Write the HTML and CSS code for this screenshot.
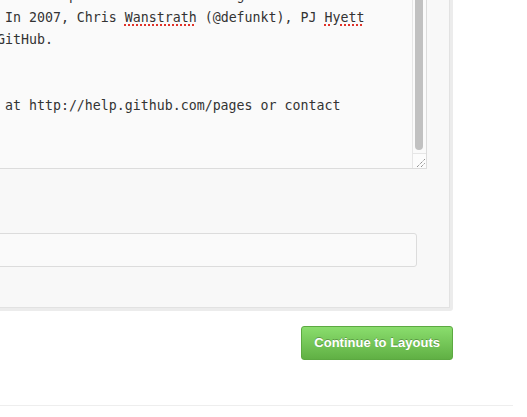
FILE: index.html
```html
<!DOCTYPE html>
<html>
<head>
<meta charset="utf-8">
<link rel="stylesheet" href="styles.css">
</head>
<body>
<div class="wrap">
  <div class="panel">
    <div class="textarea">
      <div class="text">
        <div class="line">to their profile. The resulting `&lt;a&gt;` element will</div>
        <div class="line"> In 2007, Chris <span class="misspell">Wanstrath</span> (@defunkt), PJ <span class="misspell">Hyett</span></div>
        <div class="line">GitHub.</div>
        <div class="line"> </div>
        <div class="line"> </div>
        <div class="line"> at http://help.github.com/pages or contact</div>
        <div class="line"> </div>
      </div>
      <div class="scrollbar">
        <div class="track"><div class="thumb"></div></div>
        <div class="corner">
          <svg width="13" height="14" viewBox="0 0 13 14">
            <line x1="4" y1="13" x2="12" y2="5" stroke="#666" stroke-width="1" stroke-dasharray="1 1"/>
            <line x1="8" y1="13" x2="12" y2="9" stroke="#666" stroke-width="1" stroke-dasharray="1 1"/>
          </svg>
        </div>
      </div>
    </div>
    <div class="input"></div>
  </div>
  <div class="actions">
    <button class="btn">Continue to Layouts</button>
  </div>
</div>
<div class="footer"></div>
</body>
</html>
```
FILE: styles.css
```css
html, body {
  margin: 0;
  padding: 0;
  background: #fff;
  overflow: hidden;
  width: 527px;
  height: 417px;
}
.wrap {
  margin-left: -60px;
  width: 513px;
  margin-top: -40px;
}
.panel {
  background: #f8f8f8;
  border: 3px solid #ececec;
  box-shadow: inset 0 0 0 1px #e2e2e2;
  border-radius: 3px;
  padding: 1px 23px 41px 21px;
}
.textarea {
  display: flex;
  height: 205px;
  box-sizing: border-box;
  border: 1px solid #dcdcdc;
  background: #fafafa;
}
.text {
  flex: 1;
  overflow: hidden;
  padding: 20px 0 0 32px;
  font-family: "DejaVu Sans Mono", monospace;
  font-size: 13.28px;
  line-height: 22px;
  color: #333;
}
.line {
  white-space: pre;
  height: 22px;
}
.misspell {
  text-decoration: underline dotted #e0332a;
  text-decoration-thickness: 2px;
  text-underline-offset: 2px;
}
.scrollbar {
  width: 13px;
  border-left: 1px solid #e6e6e6;
  display: flex;
  flex-direction: column;
  background: #fafafa;
}
.track {
  flex: 1;
  padding: 5px 2px 0 2px;
}
.thumb {
  height: 180px;
  width: 8px;
  background: #c1c1c1;
  border-radius: 4px;
}
.corner {
  height: 14px;
  border-top: 1px solid #e6e6e6;
  background: #fcfcfc;
  display: flex;
}
.input {
  margin-top: 64px;
  margin-right: 10px;
  height: 34px;
  box-sizing: border-box;
  border: 1px solid #dcdcdc;
  border-radius: 3px;
  background: #fafafa;
}
.actions {
  display: flex;
  justify-content: flex-end;
  margin-top: 15px;
}
.btn {
  height: 34px;
  box-sizing: border-box;
  padding: 0 12px;
  border: 1px solid #5ca941;
  border-radius: 3px;
  background: linear-gradient(#8add6d, #60b044);
  color: #fff;
  font-family: "Liberation Sans", Arial, sans-serif;
  font-weight: bold;
  font-size: 13px;
  line-height: 32px;
  text-shadow: 0 -1px 0 rgba(0, 0, 0, 0.25);
  cursor: pointer;
}
.footer {
  margin-top: 45px;
  width: 513px;
  border-top: 1px solid #eee;
}
```
